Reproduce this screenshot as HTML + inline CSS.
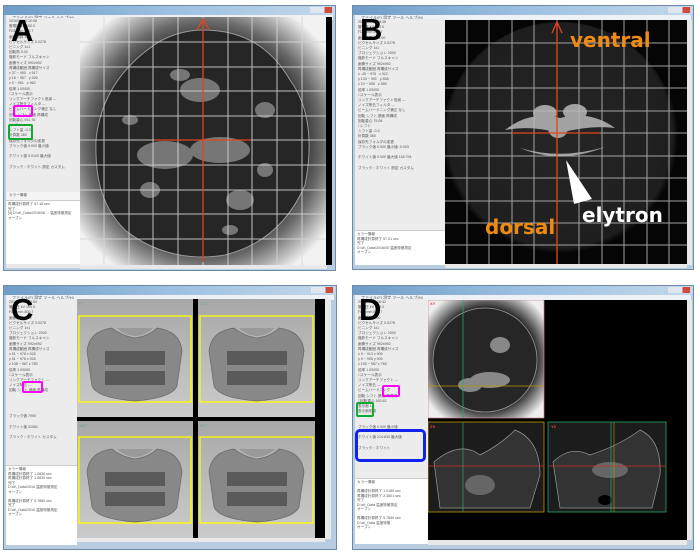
<!DOCTYPE html>
<html><head><meta charset="utf-8"><style>
*{margin:0;padding:0;box-sizing:border-box}
body{width:700px;height:554px;background:#fff;position:relative;overflow:hidden;font-family:"Liberation Sans","Noto Sans CJK JP",sans-serif}
.win{position:absolute;background:#b9cde0;border:1px solid #6f8aa8}
.tb{position:absolute;left:0;right:0;top:0;height:9px;background:linear-gradient(90deg,#6f9cc8,#9dc0e0 50%,#c3d8ea)}
.btns{position:absolute;right:3px;top:1px;width:22px;height:6px;background:linear-gradient(90deg,#dfe7f0 0 33%,#dfe7f0 33% 66%,#d24a3a 66%)}
.mb{position:absolute;left:2px;right:2px;top:9px;height:5px;background:#eef2f7;font-size:4px;line-height:5px;color:#555;padding-left:6px}
.lp{position:absolute;background:#ececec;font-size:3.6px;line-height:5.2px;color:#555;overflow:hidden;padding:1px 3px}
.log{position:absolute;background:#fff;font-size:3.6px;line-height:4.5px;color:#555;padding:1px 2px;border-top:1px solid #ccc}
.img{position:absolute;background:#000;overflow:hidden}
.sb{position:absolute;background:#e8e8e8}
.big{position:absolute;font:bold 31px "Liberation Sans",sans-serif;color:#000}
.box{position:absolute;border-radius:2px}
</style></head><body>

<!-- ===== A ===== -->
<div class="win" style="left:3px;top:5px;width:333px;height:266px">
<div class="tb"></div><div class="btns"></div><div class="mb">ファイル(F) 設定 ツール ヘルプ(H)</div>
</div>
<div class="lp" style="left:6px;top:18px;width:74px;height:174px">
2016/08/10 10:08<br>管電圧 kV 100.0<br>FDD mm 800.7<br>画像積算 3.00<br>ピクセルサイズ 0.0278<br>ビニング 1x1<br>回転角 0.00<br>撮影モード フルスキャン<br>画像サイズ 992x992<br>再構成範囲 再構成サイズ<br>x 37 ~ 950 &nbsp; x 917<br>y 16 ~ 967 &nbsp; y 926<br>z 0 ~ 961 &nbsp; z 962<br>倍率 1.00000<br>□スケール表示<br>リングアーチファクト低減 ---<br>ノイズ除去フィルタ ---<br>ビームハードニング補正 なし<br>回転 シフト 断面 再構成<br>回転重心 931.76<br>□シフト<br>シフト量 -0.3<br>計算数 360<br>保存先フォルダの変更<br>ブラック値 0.000 最小値<br><br>ホワイト値 0.0100 最大値<br><br>ブラック・ホワイト 設定 カスタム
</div>
<div class="lp" style="left:6px;top:192px;width:74px;height:8px;background:#f4f4f4">カラー情報</div>
<div class="log" style="left:6px;top:200px;width:74px;height:64px">再構成計算終了 57.18 sec<br>完了<br>[4] D:\ct\_Data\2016\08 ... 温度特徴測定<br>オープン</div>
<div class="sb" style="left:6px;top:264px;width:74px;height:4px"></div>
<div class="img" style="left:80px;top:17px;width:247px;height:248px">
<svg width="247" height="248" viewBox="80 17 247 248">
<defs><radialGradient id="ga" cx="50%" cy="50%" r="62%"><stop offset="0" stop-color="#222"/><stop offset=".6" stop-color="#1c1c1c"/><stop offset=".78" stop-color="#6a6a6a"/><stop offset="1" stop-color="#f2f2f2"/></radialGradient></defs>
<rect x="80" y="17" width="247" height="248" fill="url(#ga)"/>
<path d="M203 30 C240 30 270 45 290 80 C312 110 312 150 305 185 C290 220 265 245 225 255 C185 262 150 250 125 230 C100 205 95 175 96 140 C100 100 120 70 150 48 C165 36 185 30 203 30Z" fill="#262626" stroke="#9a9a9a" stroke-width="1"/>
<g fill="#8a8a8a" opacity=".8">
<ellipse cx="220" cy="150" rx="30" ry="13"/><ellipse cx="165" cy="155" rx="28" ry="14"/><ellipse cx="200" cy="90" rx="20" ry="12"/><ellipse cx="265" cy="110" rx="10" ry="8"/><ellipse cx="240" cy="200" rx="14" ry="10"/><ellipse cx="180" cy="75" rx="10" ry="6"/><ellipse cx="150" cy="190" rx="10" ry="8"/><ellipse cx="265" cy="170" rx="8" ry="7"/><ellipse cx="230" cy="230" rx="8" ry="5"/><ellipse cx="130" cy="120" rx="8" ry="5"/>
</g>
<g stroke="#d8d8d8" stroke-width="1" opacity=".85">
<path d="M104 17V265M129 17V265M153 17V265M178 17V265M203 17V265M228 17V265M252 17V265M277 17V265M302 17V265"/>
<path d="M80 42H327M80 67H327M80 91H327M80 116H327M80 140H327M80 165H327M80 190H327M80 214H327M80 239H327"/>
</g>
<g stroke="#e0461e" stroke-width="1.3" fill="none"><path d="M203 262V19M197 30L203 19L209 30M154 140H251"/></g>
</svg></div>
<div style="position:absolute;left:326px;top:17px;width:6px;height:248px;background:#000"></div>
<div class="sb" style="left:80px;top:265px;width:247px;height:4px"></div>
<div class="big" style="left:11px;top:13px">A</div>
<div class="box" style="left:13px;top:105px;width:20px;height:12px;border:2px solid #f0f"></div>
<div class="box" style="left:8px;top:124px;width:25px;height:16px;border:2px solid #1a3"></div>

<!-- ===== B ===== -->
<div class="win" style="left:352px;top:5px;width:342px;height:265px">
<div class="tb"></div><div class="btns"></div><div class="mb">ファイル(F) 設定 ツール ヘルプ(H)</div>
</div>
<div class="lp" style="left:355px;top:19px;width:90px;height:211px">
2016/05/10 18:38<br>管電圧 kV 100.0<br>FDD mm 800.7<br>画像積算 2 &nbsp; 4.00<br>ピクセルサイズ 0.0278<br>ビニング 1x1<br>プロジェクション 2000<br>撮影モード フルスキャン<br>画像サイズ 992x992<br>再構成範囲 再構成サイズ<br>x -45 ~ 976 &nbsp; x 922<br>y 134 ~ 991 &nbsp; y 858<br>z 10 ~ 598 &nbsp; z 589<br>倍率 1.00000<br>□スケール表示<br>リングアーチファクト低減 ---<br>ノイズ除去フィルタ ---<br>ビームハードニング補正 なし<br>回転 シフト 断面 再構成<br>回転重心 75.08<br>□シフト<br>シフト量 -0.3<br>計算数 360<br>保存先フォルダの変更<br>ブラック値 0.000 最小値 -0.003<br><br>ホワイト値 0.000 最大値 118.794<br><br>ブラック・ホワイト 設定 カスタム
</div>
<div class="log" style="left:355px;top:230px;width:90px;height:35px">カラー情報<br>再構成計算終了 57.01 sec<br>完了<br>D:\ct\_Data\2016\05 温度特徴測定<br>オープン</div>
<div class="img" style="left:445px;top:20px;width:242px;height:244px">
<svg width="242" height="244" viewBox="445 20 242 244">
<defs><radialGradient id="gb" cx="50%" cy="48%" r="50%"><stop offset="0" stop-color="#262626"/><stop offset=".95" stop-color="#1e1e1e"/><stop offset="1" stop-color="#050505"/></radialGradient></defs>
<rect x="445" y="20" width="242" height="244" fill="#050505"/>
<circle cx="560" cy="140" r="118" fill="url(#gb)"/>
<g fill="#b8b8b8" opacity=".85"><ellipse cx="545" cy="113" rx="12" ry="8"/><ellipse cx="575" cy="112" rx="12" ry="8"/><ellipse cx="558" cy="128" rx="10" ry="10"/><path d="M505 130 Q530 110 560 118 Q590 110 615 128 Q590 125 560 133 Q530 125 505 130Z"/><path d="M520 148 Q560 160 605 147 Q560 165 520 148Z"/></g>
<g stroke="#bbb" stroke-width="1" opacity=".85">
<path d="M467 20V264M489 20V264M512 20V264M534 20V264M557 20V264M579 20V264M602 20V264M624 20V264M647 20V264M669 20V264"/>
<path d="M445 43H687M445 66H687M445 88H687M445 111H687M445 133H687M445 156H687M445 178H687M445 201H687M445 223H687M445 245H687"/>
</g>
<g stroke="#e0461e" stroke-width="1.3" fill="none"><path d="M557 264V22M552 33L557 22L562 33M512 133H600"/></g>
<polygon points="566,160 574,204 592,199" fill="#fff"/>
</svg></div>
<div style="position:absolute;left:570px;top:28px;font:bold 20px 'DejaVu Sans','Liberation Sans',sans-serif;color:#f08a10">ventral</div>
<div style="position:absolute;left:582px;top:203px;font:bold 20px 'DejaVu Sans','Liberation Sans',sans-serif;color:#fff">elytron</div>
<div style="position:absolute;left:485px;top:215px;font:bold 20px 'DejaVu Sans','Liberation Sans',sans-serif;color:#f08a10">dorsal</div>
<div class="sb" style="left:687px;top:20px;width:5px;height:245px"></div>
<div class="sb" style="left:445px;top:264px;width:242px;height:4px"></div>
<div class="big" style="left:360px;top:12px">B</div>

<!-- ===== C ===== -->
<div class="win" style="left:3px;top:285px;width:334px;height:265px">
<div class="tb"></div><div class="btns"></div><div class="mb">ファイル(F) 設定 ツール ヘルプ(H)</div>
</div>
<div class="lp" style="left:6px;top:299px;width:71px;height:186px">
2016/05/10 20:53<br>管電圧 kV 100.0<br>FDD mm 800.7<br>画像積算 3.00<br>ピクセルサイズ 0.0278<br>ビニング 1x1<br>プロジェクション 2000<br>撮影モード フルスキャン<br>画像サイズ 992x992<br>再構成範囲 再構成サイズ<br>x 51 ~ 978 x 928<br>y 51 ~ 978 x 928<br>z 108 ~ 967 z 780<br>倍率 1.00000<br>□スケール表示<br>リングアーチファクト ---<br>ノイズ除去 ---<br>回転 シフト 断面 再構成<br><br><br><br><br>ブラック値 7990<br><br>ホワイト値 31081<br><br>ブラック・ホワイト カスタム
</div>
<div class="log" style="left:6px;top:465px;width:71px;height:80px">カラー情報<br>再構成計算終了 1.0836 sec<br>再構成計算終了 1.0835 sec<br>完了<br>D:\ct\_Data\2016 温度特徴測定<br>オープン<br><br>再構成計算終了 5.7880 sec<br>完了<br>D:\ct\_Data\2016 温度特徴測定<br>オープン</div>
<div class="img" style="left:77px;top:299px;width:248px;height:239px">
<svg width="248" height="239" viewBox="77 299 248 239">
<defs><linearGradient id="gc" x1="0" y1="0" x2="0" y2="1"><stop offset="0" stop-color="#a8a8a8"/><stop offset=".5" stop-color="#bababa"/><stop offset="1" stop-color="#cbcbcb"/></linearGradient>
<g id="bug"><path d="M10 35 Q12 15 35 12 Q45 20 58 22 Q72 20 80 12 Q103 15 105 35 L100 70 Q95 82 58 85 Q20 82 15 70Z" fill="#888" stroke="#666" stroke-width=".7"/><rect x="28" y="35" width="60" height="14" fill="#5a5a5a"/><rect x="28" y="55" width="60" height="14" fill="#5a5a5a"/><path d="M40 12 Q58 28 76 12" fill="#9a9a9a"/></g></defs>
<rect x="77" y="299" width="248" height="239" fill="#000"/>
<g>
<rect x="77" y="299" width="116" height="118" fill="url(#gc)"/><rect x="79" y="316" width="112" height="86" fill="none" stroke="#ff0" stroke-width="1.3"/><use href="#bug" x="77" y="316"/>
<rect x="198" y="299" width="117" height="118" fill="url(#gc)"/><rect x="200" y="316" width="113" height="86" fill="none" stroke="#ff0" stroke-width="1.3"/><use href="#bug" x="199" y="316"/>
<rect x="77" y="421" width="116" height="117" fill="url(#gc)"/><rect x="79" y="437" width="112" height="86" fill="none" stroke="#ff0" stroke-width="1.3"/><use href="#bug" x="77" y="437"/>
<rect x="198" y="421" width="117" height="117" fill="url(#gc)"/><rect x="200" y="437" width="113" height="86" fill="none" stroke="#ff0" stroke-width="1.3"/><use href="#bug" x="199" y="437"/>
</g>
<g font-size="4" fill="#6a8" font-family="Liberation Sans"><text x="79" y="305">0°</text><text x="200" y="305">270°</text><text x="79" y="427">180°</text><text x="200" y="427">90°</text></g>
</svg></div>
<div class="sb" style="left:325px;top:299px;width:6px;height:240px"></div>
<div class="sb" style="left:77px;top:538px;width:248px;height:4px"></div>
<div class="big" style="left:11px;top:292px">C</div>
<div class="box" style="left:22px;top:381px;width:21px;height:12px;border:2px solid #f0f"></div>

<!-- ===== D ===== -->
<div class="win" style="left:352px;top:285px;width:342px;height:265px">
<div class="tb"></div><div class="btns"></div><div class="mb">ファイル(F) 設定 ツール ヘルプ(H)</div>
</div>
<div class="lp" style="left:355px;top:299px;width:73px;height:190px">
2016/05/10 18:42<br>管電圧 kV 100.0<br>FDD mm 800.7<br>画像積算 3.00<br>ピクセルサイズ 0.0278<br>ビニング 1x1<br>プロジェクション 2000<br>撮影モード フルスキャン<br>画像サイズ 992x992<br>再構成範囲 再構成サイズ<br>x 9 ~ 913 x 905<br>y 9 ~ 905 y 905<br>z 190 ~ 957 z 768<br>倍率 1.00000<br>□スケール表示<br>リングアーチファクト ---<br>ノイズ除去 ---<br>ビームハードニング<br>回転 シフト 断面 再構成<br>□回転重心 183.63<br>表示面 1<br>表示面切替<br><br><br>ブラック値 0.000 最小値<br><br>ホワイト値 214.834 最大値<br><br>ブラック・ホワイト
</div>
<div class="log" style="left:355px;top:478px;width:73px;height:66px">カラー情報<br><br>再構成計算終了 1.0185 sec<br>再構成計算終了 2.3801 sec<br>完了<br>D:\ct\_Data 温度特徴測定<br>オープン<br><br>再構成計算終了 5.7890 sec<br>D:\ct\_Data 温度特徴<br>オープン</div>
<div class="img" style="left:428px;top:300px;width:259px;height:240px">
<svg width="259" height="240" viewBox="428 300 259 240">
<defs><radialGradient id="gd" cx="50%" cy="50%" r="62%"><stop offset="0" stop-color="#1c1c1c"/><stop offset=".7" stop-color="#2a2a2a"/><stop offset="1" stop-color="#eee"/></radialGradient></defs>
<rect x="428" y="300" width="259" height="240" fill="#000"/>
<rect x="428" y="300" width="116" height="118" fill="url(#gd)" stroke="#c88" stroke-width=".7"/>
<circle cx="485" cy="360" r="52" fill="#262626" stroke="#999" stroke-width=".8"/>
<g fill="#888"><ellipse cx="490" cy="380" rx="20" ry="8"/><ellipse cx="500" cy="345" rx="10" ry="8"/><ellipse cx="470" cy="385" rx="12" ry="7"/></g>
<path d="M463 300V418" stroke="#2a6" stroke-width=".8"/><path d="M428 386H544" stroke="#b90" stroke-width=".8"/>
<rect x="428" y="422" width="116" height="90" fill="#1c1c1c" stroke="#b90" stroke-width=".8"/>
<rect x="548" y="422" width="118" height="90" fill="#1c1c1c" stroke="#2a6" stroke-width=".8"/>
<path d="M434 462 Q460 440 480 455 Q500 445 515 430 Q540 440 540 475 L530 508 L440 508Z" fill="#333" stroke="#999" stroke-width=".7"/>
<path d="M553 462 Q570 445 590 455 Q620 445 640 430 Q662 440 660 475 L652 508 L560 508Z" fill="#333" stroke="#999" stroke-width=".7"/>
<g fill="#666"><ellipse cx="480" cy="485" rx="15" ry="10"/><ellipse cx="610" cy="470" rx="18" ry="8"/></g>
<ellipse cx="605" cy="500" rx="7" ry="5" fill="#000"/>
<path d="M463 422V512M611 422V512" stroke="#2a6" stroke-width=".7"/>
<path d="M428 466H544M548 466H666" stroke="#c33" stroke-width=".7"/>
<path d="M614 422V512" stroke="#b90" stroke-width=".6"/>
<g font-size="4" fill="#e44" font-family="Liberation Sans" font-weight="bold"><text x="430" y="305">XY</text><text x="430" y="428">ZX</text><text x="551" y="428">YZ</text></g>
</svg></div>
<div class="sb" style="left:687px;top:300px;width:5px;height:240px"></div>
<div class="sb" style="left:428px;top:540px;width:259px;height:5px"></div>
<div class="big" style="left:359px;top:292px">D</div>
<div class="box" style="left:382px;top:385px;width:18px;height:12px;border:2px solid #f0f"></div>
<div class="box" style="left:356px;top:402px;width:18px;height:15px;border:2px solid #1a3"></div>
<div class="box" style="left:355px;top:429px;width:71px;height:33px;border:3px solid #12e;border-radius:5px"></div>
</body></html>
